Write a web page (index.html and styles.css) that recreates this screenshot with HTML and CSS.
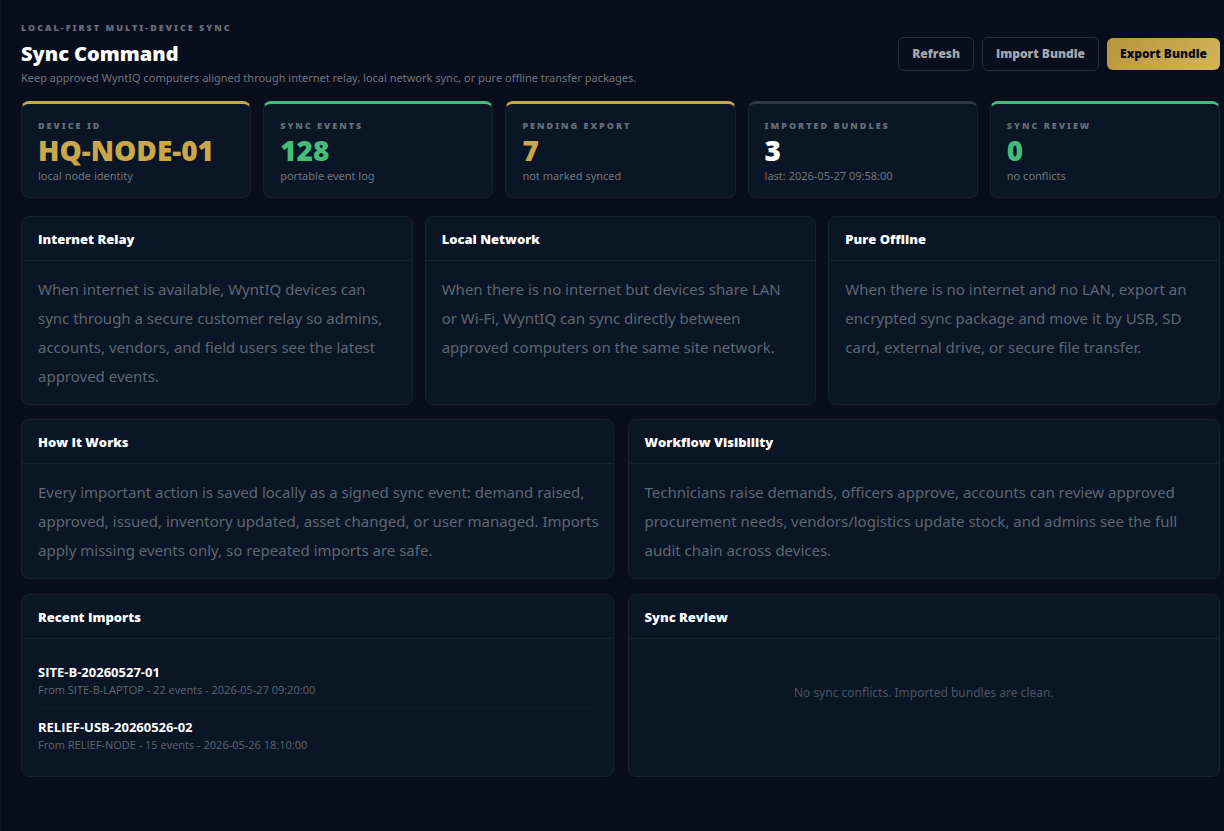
FILE: index.html
```html
<!DOCTYPE html>
<html lang="en">
<head>
<meta charset="utf-8">
<meta name="viewport" content="width=device-width, initial-scale=1">
<title>Sync Command</title>
<link rel="stylesheet" href="styles.css">
</head>
<body>
<main class="page">
  <header class="page-head">
    <div class="page-intro">
      <p class="eyebrow">LOCAL-FIRST MULTI-DEVICE SYNC</p>
      <h1 class="page-title">Sync Command</h1>
      <p class="page-sub">Keep approved WyntIQ computers aligned through internet relay, local network sync, or pure offline transfer packages.</p>
    </div>
    <div class="actions">
      <button type="button" class="btn btn-ghost">Refresh</button>
      <button type="button" class="btn btn-ghost">Import Bundle</button>
      <button type="button" class="btn btn-gold">Export Bundle</button>
    </div>
  </header>

  <section class="stats" aria-label="Sync status">
    <article class="stat stat-gold">
      <p class="stat-label">DEVICE ID</p>
      <p class="stat-value">HQ-NODE-01</p>
      <p class="stat-note">local node identity</p>
    </article>
    <article class="stat stat-green">
      <p class="stat-label">SYNC EVENTS</p>
      <p class="stat-value">128</p>
      <p class="stat-note">portable event log</p>
    </article>
    <article class="stat stat-gold">
      <p class="stat-label">PENDING EXPORT</p>
      <p class="stat-value">7</p>
      <p class="stat-note">not marked synced</p>
    </article>
    <article class="stat">
      <p class="stat-label">IMPORTED BUNDLES</p>
      <p class="stat-value">3</p>
      <p class="stat-note">last: 2026-05-27 09:58:00</p>
    </article>
    <article class="stat stat-green">
      <p class="stat-label">SYNC REVIEW</p>
      <p class="stat-value">0</p>
      <p class="stat-note">no conflicts</p>
    </article>
  </section>

  <section class="grid grid-three" aria-label="Sync modes">
    <article class="panel">
      <h2 class="panel-title">Internet Relay</h2>
      <p class="panel-text">When internet is available, WyntIQ devices can sync through a secure customer relay so admins, accounts, vendors, and field users see the latest approved events.</p>
    </article>
    <article class="panel">
      <h2 class="panel-title">Local Network</h2>
      <p class="panel-text">When there is no internet but devices share LAN or&nbsp;Wi-Fi, WyntIQ can sync directly between approved computers on the same site network.</p>
    </article>
    <article class="panel">
      <h2 class="panel-title">Pure Offline</h2>
      <p class="panel-text">When there is no internet and no LAN, export an encrypted sync package and move it by USB, SD card, external drive, or secure file transfer.</p>
    </article>
  </section>

  <section class="grid grid-two">
    <article class="panel">
      <h2 class="panel-title">How It Works</h2>
      <p class="panel-text">Every important action is saved locally as a signed sync event: demand raised, approved, issued, inventory updated, asset changed, or user managed. Imports apply missing events only, so repeated imports are safe.</p>
    </article>
    <article class="panel">
      <h2 class="panel-title">Workflow Visibility</h2>
      <p class="panel-text">Technicians raise demands, officers approve, accounts can review approved procurement needs, vendors/logistics update stock, and admins see the full audit chain across devices.</p>
    </article>
    <article class="panel">
      <h2 class="panel-title">Recent Imports</h2>
      <ul class="imports">
        <li class="import">
          <p class="import-name">SITE-B-20260527-01</p>
          <p class="import-meta">From SITE-B-LAPTOP - 22 events - 2026-05-27 09:20:00</p>
        </li>
        <li class="import">
          <p class="import-name">RELIEF-USB-20260526-02</p>
          <p class="import-meta">From RELIEF-NODE - 15 events - 2026-05-26 18:10:00</p>
        </li>
      </ul>
    </article>
    <article class="panel">
      <h2 class="panel-title">Sync Review</h2>
      <p class="empty">No sync conflicts. Imported bundles are clean.</p>
    </article>
  </section>
</main>
</body>
</html>
```

FILE: styles.css
```css
:root {
  --bg: #080e1c;
  --card: #0a1525;
  --line: #172231;
  --gold: #c9a84c;
  --green: #48bb78;
  --muted: #70757e;
  --dim: #5f6771;
  --heading: "Segoe UI", "Open Sans", "Noto Sans", sans-serif;
}

* { box-sizing: border-box; }

body {
  margin: 0;
  background: var(--bg);
  color: #fff;
  font-family: "Segoe UI", "Noto Sans", "Open Sans", sans-serif;
}

h1, h2, p, ul { margin: 0; padding: 0; }

.page {
  min-height: 100vh;
  padding: 20px 4px 20px 20px;
  border-left: 1px solid #12171f;
}

.page-head {
  display: flex;
  align-items: center;
  justify-content: space-between;
  gap: 16px;
  margin-bottom: 14px;
}

.eyebrow,
.stat-label {
  font-size: 9px;
  line-height: 15px;
  font-weight: 900;
  letter-spacing: 2px;
  color: #666e78;
}

.page-title {
  font-size: 20px;
  line-height: 28px;
  font-weight: 900;
  margin: 5px 0 1px;
}

.page-sub {
  font-size: 11px;
  line-height: 18px;
  color: var(--muted);
}

.actions {
  display: flex;
  align-items: center;
  flex-shrink: 0;
  gap: 8px;
}

.btn {
  border: 0;
  border-radius: 6px;
  padding: 8px 13px;
  font: 800 12px/16px var(--heading);
  cursor: pointer;
}

.btn-ghost {
  background: transparent;
  border: 1px solid #272d39;
  color: #a5a8ad;
}

.btn-gold {
  background: linear-gradient(135deg, #b8943a, #d4b55a);
  color: #080e1c;
}

.stats {
  display: grid;
  grid-template-columns: repeat(5, 1fr);
  gap: 12px;
  margin-bottom: 18px;
}

.stat {
  padding: 14px 16px 13px;
  background: var(--card);
  border: 1px solid var(--line);
  border-top: 3px solid #2d3748;
  border-radius: 8px;
}

.stat-value {
  font-size: 28px;
  line-height: 28px;
  font-weight: 900;
  margin: 3px 0 4px;
}

.stat-note {
  font-size: 11px;
  line-height: 16px;
  color: var(--muted);
}

.stat-gold { border-top-color: var(--gold); }
.stat-gold .stat-value { color: var(--gold); }
.stat-green { border-top-color: var(--green); }
.stat-green .stat-value { color: var(--green); }

.grid { display: grid; }

.grid-three {
  grid-template-columns: repeat(3, 1fr);
  gap: 12px;
  margin-bottom: 14px;
}

.grid-two {
  grid-template-columns: repeat(2, 1fr);
  gap: 15px 14px;
}

.panel {
  background: var(--card);
  border: 1px solid var(--line);
  border-radius: 8px;
}

.panel-title {
  padding: 13px 16px 12px;
  border-bottom: 1px solid var(--line);
  font: 800 13px/18px var(--heading);
}

.panel-text {
  padding: 14px 12px 13px 16px;
  font-size: 15px;
  line-height: 29px;
  color: var(--dim);
}

.imports {
  list-style: none;
  padding: 14px 16px;
}

.import { padding: 10px 0 8px; }
.import + .import { border-top: 1px solid #121d2c; }

.import-name {
  font: 700 13px/18px var(--heading);
}

.import-meta {
  font: 400 11px/18px var(--heading);
  color: var(--dim);
}

.empty {
  padding: 44px 16px;
  text-align: center;
  font-size: 12px;
  line-height: 20px;
  color: #4c545f;
}
```
